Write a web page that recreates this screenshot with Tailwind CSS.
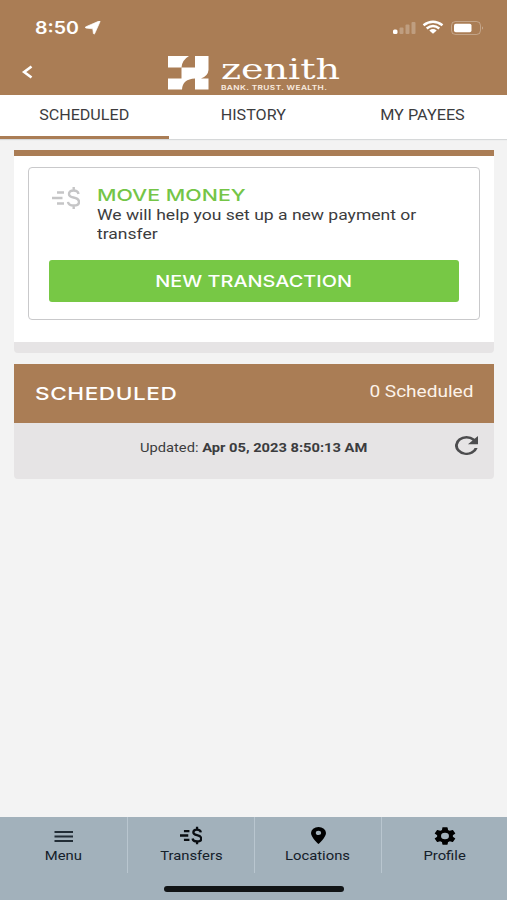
<!DOCTYPE html>
<html lang="en">
<head>
  <meta charset="UTF-8" />
  <meta name="viewport" content="width=device-width, initial-scale=1.0" />
  <title>Zenith - Transfers</title>
  <script src="https://cdn.jsdelivr.net/npm/@tailwindcss/browser@4"></script>
</head>
<body class="bg-[#f3f3f3] h-[900px] flex flex-col overflow-hidden font-['Roboto',sans-serif] text-[#3c3c3e]">
  <header class="bg-[#aa7d55] h-[95px] shrink-0 text-white">
    <!-- Status bar -->
    <div class="flex items-center justify-between h-[54px] pt-px pl-[35px] pr-[23px]">
      <div class="flex items-center">
        <span class="w-[50px] text-[17px] leading-5 font-semibold font-['Inter',sans-serif]"><span class="inline-block origin-left scale-x-[1.15]">8:50</span></span>
        <svg class="w-4 h-[14px]" viewBox="0 0 16 14" preserveAspectRatio="none"><path d="M15 .7 9.700 12.600Q9 13.800 8.400 12.500L7.800 7.800 1 7.100Q-.6 6.400 1 5.700L14 .1Q15.400-.3 15 .7Z" fill="#fff" stroke="#fff" stroke-width=".7"/></svg>
      </div>
      <div class="flex items-center">
        <svg class="w-[91px] h-4" viewBox="0 0 91 16">
          <g fill="#fff">
            <rect x="0" y="9.500" width="4.500" height="4.500" rx="1.500"/>
            <g opacity=".25"><rect x="6.500" y="7.500" width="4" height="6.500" rx="1"/><rect x="12.500" y="4.500" width="4" height="9.500" rx="1"/><rect x="18.500" y="2" width="4" height="12" rx="1"/></g>
            <path d="M36.300 10.400 40 13.800 43.700 10.400Q40 7.700 36.300 10.400Z"/>
            <rect x="61" y="3.700" width="17.500" height="8.600" rx="1.800"/>
            <path d="M89 6.300Q90.800 8 89 9.700Z" opacity=".5"/>
          </g>
          <g fill="none" stroke="#fff" stroke-width="2.500"><path d="M30.500 5.200Q40-1.800 49.500 5.200"/><path d="M33.700 8.500Q40 3.600 46.300 8.500"/></g>
          <rect x="58.500" y="1.500" width="29" height="13" rx="4" fill="none" stroke="#fff" stroke-opacity=".3"/>
        </svg>
      </div>
    </div>
    <div class="flex h-[41px] pl-[21px]">
      <svg class="w-3 h-[14px] mt-[11px]" viewBox="0 0 12 14"><path d="M10.500 1.500 3.200 7l7.300 5.500" fill="none" stroke="#fff" stroke-width="2.700"/></svg>
      <svg class="w-[41px] h-[34px] ml-[135px] mt-[2px]" viewBox="0 0 41 34" preserveAspectRatio="none"><path d="M0 0H21Q14 4 13.500 11.500H27V0H40.500V14Q40 20 33 22.500H40.500V33.500H27V22.500Q14.500 23 14 33.500H0V22.500H13.500V11.500H0Z" fill="#fff"/></svg>
      <div class="ml-3 flex flex-col">
        <span class="mt-[2px] origin-left scale-x-[1.36] font-['DejaVu_Serif',serif] text-[28px] leading-[27px] whitespace-nowrap">zenith</span>
        <span class="mt-px origin-left scale-x-[1.38] font-['Inter',sans-serif] font-semibold text-[6px] leading-[8px] tracking-[0.3px] whitespace-nowrap w-0 text-[#fbeee2]">BANK. TRUST. WEALTH.</span>
      </div>
    </div>
  </header>

  <!-- Tabs -->
  <nav class="grid grid-cols-3 h-11 shrink-0 bg-white shadow-[0_1px_1px_#d6d8d9] text-sm leading-[40px] text-center">
    <a class="border-b-[3px] border-[#aa7d55]"><span class="inline-block scale-x-[1.15]">SCHEDULED</span></a>
    <a><span class="inline-block scale-x-[1.15]">HISTORY</span></a>
    <a><span class="inline-block scale-x-[1.16]">MY PAYEES</span></a>
  </nav>

  <main class="flex-1 pt-[11px] px-[14px]">
    <section class="h-[203px] w-[480px] rounded-b bg-[#e6e4e5]">
      <div class="h-[192px] border-t-6 border-[#aa7d55] bg-white pt-[11px] px-[14px]">
        <div class="h-[153px] border border-[#c9c9cb] rounded-[4px] px-[20px]">
          <div class="flex pt-[19px]">
            <svg class="w-7 h-6 -mt-px ml-[3px] mr-[17px] shrink-0" viewBox="0 0 28 24"><g fill="none" stroke="#c5c5c6" stroke-width="2.400"><path d="M5 6.500h7M0 12h10.500M5 17.500h7M26.500 8Q26 4.500 21.500 4.500 17 4.500 17 8 17 10.800 21.500 11.500 27 12.500 27 16 27 19.500 21.800 19.500 16.500 19.500 16 15.800M21.700 1v3.500M21.700 19.500V23"/></g></svg>
            <div>
              <h2 class="h-[19px] text-[16.5px] leading-[17px] font-['Inter',sans-serif] text-[#74c547] font-medium"><span class="inline-block origin-left scale-x-[1.295] whitespace-nowrap">MOVE MONEY</span></h2>
              <p class="text-[15px] leading-[19px]"><span class="inline-block origin-left scale-x-[1.168] whitespace-nowrap">We will help you set up a new payment or<br>transfer</span></p>
            </div>
          </div>
          <button class="mt-[16px] w-[410px] h-[42px] rounded-[3px] bg-[#77c845] text-white text-[16.5px] font-medium font-['Inter',sans-serif]"><span class="inline-block scale-x-[1.205]">NEW TRANSACTION</span></button>
        </div>
      </div>
    </section>

    <section class="mt-[11px] h-[115px] w-[480px] rounded-b bg-[#e6e4e5]">
      <div class="h-[59px] bg-[#aa7d55] text-white flex justify-between pl-[21px] pr-[21px]">
        <h2 class="origin-left scale-x-[1.29] text-[17.5px] leading-[60px] font-medium font-['Inter',sans-serif] tracking-wide">SCHEDULED</h2>
        <span class="origin-right scale-x-[1.19] text-base leading-[55px] text-[#fdf3ea]">0 Scheduled</span>
      </div>
      <div class="flex h-14 pl-[126px]">
        <p class="w-[315px] text-[13px] leading-[49px]"><span class="inline-block origin-left scale-x-[1.13] whitespace-nowrap">Updated: <b>Apr 05, 2023 8:50:13 AM</b></span></p>
        <svg class="w-[23px] h-[19px] mt-[13px] shrink-0" viewBox="4 4 16 16" preserveAspectRatio="none"><path fill="#4c4c4e" d="M17.650 6.350A7.960 7.960 0 0 0 12 4a8 8 0 1 0 7.730 10h-2.080A6 6 0 1 1 12 6c1.660 0 3.140.690 4.220 1.780L13 11h7V4z"/></svg>
      </div>
    </section>
  </main>

  <!-- Bottom bar -->
  <footer class="h-[83px] shrink-0 bg-[#a2b1bb] text-[#15202a]">
    <div class="grid grid-cols-[128px_127px_127px_125px] h-14 text-[13px] leading-[17px] text-center divide-x divide-[#b9c6cf]">
      <a class="flex flex-col items-center pt-[10px]">
        <svg class="w-5 h-5" viewBox="0 0 20 20"><path d="M.500 5h18.500M.500 9.500h18.500M.500 14h18.500" stroke="#222d36" stroke-width="1.800"/></svg>
        <span class="scale-x-[1.14]">Menu</span>
      </a>
      <a class="flex flex-col items-center pt-[9px]">
        <svg class="w-[22px] h-[19px] mb-[2px]" viewBox="0 0 28 24" preserveAspectRatio="none"><g fill="none" stroke="#090d11" stroke-width="2.900"><path d="M5 6.500h7M0 12h10.500M5 17.500h7M26.500 8Q26 4.500 21.500 4.500 17 4.500 17 8 17 10.800 21.500 11.500 27 12.500 27 16 27 19.500 21.800 19.500 16.500 19.500 16 15.800M21.700 1v3.500M21.700 19.500V23"/></g></svg>
        <span class="scale-x-[1.14]">Transfers</span>
      </a>
      <a class="flex flex-col items-center pt-[10px]">
        <svg class="w-[15px] h-[17px] mb-[3px]" viewBox="5 2 14 20" preserveAspectRatio="none"><path d="M12 2a7 7 0 0 0-7 7c0 5.250 7 13 7 13s7-7.750 7-13a7 7 0 0 0-7-7zm0 9.500a2.500 2.500 0 1 1 0-5 2.500 2.500 0 0 1 0 5z"/></svg>
        <span class="scale-x-[1.14]">Locations</span>
      </a>
      <a class="flex flex-col items-center pt-[10px]">
        <svg class="w-[22px] h-[18px] mb-[2px]" viewBox="2 2 20 20" preserveAspectRatio="none"><path d="M19.140 12.940c.040-.3.060-.610.060-.940s-.020-.640-.070-.940l2.030-1.580a.490.490 0 0 0 .120-.610l-1.920-3.320a.488.488 0 0 0-.590-.220l-2.390.960c-.5-.380-1.030-.7-1.620-.940l-.360-2.540a.484.484 0 0 0-.480-.410h-3.840c-.240 0-.430.170-.470.410l-.360 2.540c-.590.240-1.130.570-1.620.940l-2.390-.960c-.220-.080-.470 0-.590.220L2.740 8.870c-.120.210-.080.470.120.610l2.030 1.580c-.050.3-.090.630-.090.940s.020.640.070.940l-2.030 1.580a.490.490 0 0 0-.120.610l1.920 3.320c.120.220.370.290.590.220l2.390-.960c.5.380 1.030.7 1.620.940l.360 2.540c.050.240.240.410.480.410h3.840c.240 0 .440-.170.470-.410l.360-2.540c.590-.240 1.130-.560 1.620-.940l2.390.960c.220.080.470 0 .590-.220l1.920-3.320c.120-.220.070-.470-.120-.610zM12 15.600a3.600 3.600 0 1 1 0-7.200 3.600 3.600 0 0 1 0 7.200z"/></svg>
        <span class="scale-x-[1.14]">Profile</span>
      </a>
    </div>
    <div class="mx-auto mt-[13px] w-[180px] h-[6px] rounded-full bg-[#111416]"></div>
  </footer>
</body>
</html>
